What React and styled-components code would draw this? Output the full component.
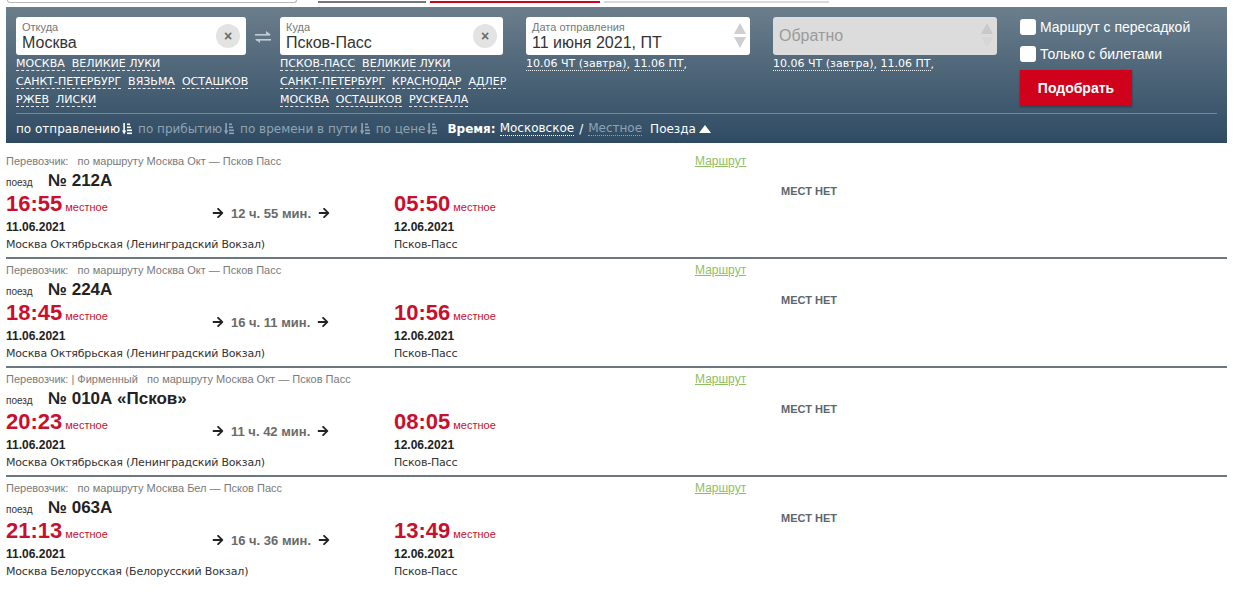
import React from 'react'
import styled, { createGlobalStyle } from 'styled-components'
import { FaArrowRight } from 'react-icons/fa'

const GlobalStyle = createGlobalStyle`
  body {
    margin: 0;
    background: #fff;
    font-family: "Liberation Sans", Arial, sans-serif;
  }
`

const TopStrip = styled.div`
  display: flex;
  align-items: flex-end;
  height: 3px;
`
const TopInput = styled.div`
  margin-left: 7px;
  width: 290px;
  height: 3px;
  box-sizing: border-box;
  border: 1px solid #b8b8b8;
  border-top: none;
  border-radius: 0 0 3px 3px;
`
const TopTab = styled.div`
  margin-left: ${p => p.ml}px;
  width: ${p => p.w}px;
  height: 2px;
  background: ${p => p.bg};
`

const Panel = styled.div`
  margin: 4px 0 0 6px;
  width: 1221px;
  box-sizing: border-box;
  padding: 10px 10px 0;
  background: linear-gradient(#6b7e8c, #2f4b63);
`
const TopArea = styled.div`
  display: flex;
  align-items: flex-start;
  height: 92px;
`
const Col = styled.div`
  width: ${p => p.w}px;
  margin-left: ${p => p.ml || 0}px;
  flex-shrink: 0;
`
const Field = styled.div`
  position: relative;
  height: 38px;
  box-sizing: border-box;
  border-radius: 3px;
  background: ${p => (p.disabled ? '#dcdcdc' : '#fff')};
  padding: 4px 6px 0;
`
const FieldLabel = styled.div`
  font-size: 11px;
  line-height: 13px;
  color: #777;
`
const FieldValue = styled.div`
  font-size: 16px;
  line-height: 18px;
  color: #333;
`
const Placeholder = styled.div`
  font-size: 16px;
  line-height: 30px;
  color: #9a9a9a;
`
const ClearBtn = styled.div`
  position: absolute;
  right: 6px;
  top: 7px;
  width: 24px;
  height: 24px;
  border-radius: 50%;
  background: #e3e3e3;
  display: flex;
  align-items: center;
  justify-content: center;
  font-weight: bold;
  font-size: 14px;
  color: #6a6a6a;
`
const Spinner = styled.div`
  position: absolute;
  right: 4px;
  top: 6px;
  display: flex;
  flex-direction: column;
  gap: 3px;
`
const SwapBox = styled.div`
  width: 34px;
  flex-shrink: 0;
  display: flex;
  justify-content: center;
  padding-top: 14px;
`
const LinkLines = styled.div`
  white-space: nowrap;
  font-family: "DejaVu Sans", Verdana, sans-serif;
  font-size: 11px;
  color: #fff;
`
const LinkLine = styled.div`
  display: flex;
  gap: ${p => (p.tight ? 0 : 7)}px;
  height: 18px;
  align-items: center;
`
const CityLink = styled.span`
  line-height: 13px;
  border-bottom: 1px dashed rgba(255, 255, 255, 0.85);
`
const DateLink = styled.span`
  line-height: 13px;
  border-bottom: 1px dotted rgba(255, 255, 255, 0.9);
`
const Options = styled.div`
  display: flex;
  flex-direction: column;
  gap: 7px;
`
const CheckRow = styled.label`
  display: flex;
  align-items: center;
  height: 20px;
  gap: 4px;
  font-size: 14px;
  color: #fff;
`
const CheckBox = styled.span`
  width: 16px;
  height: 16px;
  border-radius: 3px;
  background: #fff;
`
const SubmitBtn = styled.button`
  margin-top: -1px;
  width: 112px;
  height: 36px;
  border: none;
  background: #d0011b;
  color: #fff;
  font-family: "Liberation Sans", Arial, sans-serif;
  font-weight: bold;
  font-size: 14px;
  box-shadow: 0 1px 2px rgba(0, 0, 0, 0.35);
`
const Divider = styled.div`
  margin-top: 4px;
  height: 1px;
  background: rgba(255, 255, 255, 0.3);
`
const SortRow = styled.div`
  display: flex;
  align-items: center;
  height: 29px;
  font-family: "DejaVu Sans", Verdana, sans-serif;
  font-size: 12px;
  color: #fff;
  white-space: nowrap;
`
const SortItem = styled.span`
  display: flex;
  align-items: center;
  gap: 2px;
  margin-right: 6px;
  color: ${p => (p.active ? '#fff' : '#90a3b2')};
`
const TimeLabel = styled.span`
  font-weight: bold;
  margin: 0 4px 0 4px;
`
const TimeOpt = styled.span`
  color: ${p => (p.active ? '#fff' : '#90a3b2')};
  border-bottom: 1px dotted ${p => (p.active ? '#fff' : '#90a3b2')};
  line-height: 14px;
`
const Slash = styled.span`
  margin: 0 5px;
`
const TrainsToggle = styled.span`
  margin-left: 8px;
  display: flex;
  align-items: center;
  gap: 3px;
`

const List = styled.div`
  margin: 7px 0 0 6px;
  width: 1221px;
`
const Row = styled.div`
  display: flex;
  padding: 1px 0 5px;
  border-bottom: ${p => (p.last ? 'none' : '2px solid #6b7880')};
`
const Main = styled.div`
  width: 689px;
  flex-shrink: 0;
`
const Carrier = styled.div`
  font-size: 11px;
  line-height: 20px;
  color: #7a7a7a;
  white-space: pre;
`
const TrainLine = styled.div`
  display: flex;
  align-items: baseline;
  height: 20px;
`
const TrainWord = styled.span`
  font-size: 10px;
  color: #333;
  width: 42px;
`
const TrainNo = styled.span`
  font-size: 17px;
  font-weight: bold;
  color: #222;
  line-height: 20px;
`
const Times = styled.div`
  display: grid;
  grid-template-columns: 206px 182px auto;
`
const Point = styled.div`
  white-space: nowrap;
`
const TimeLine = styled.div`
  display: flex;
  align-items: baseline;
  gap: 3px;
  height: 26px;
`
const Clock = styled.span`
  font-size: 22px;
  font-weight: bold;
  color: #c8102e;
  line-height: 26px;
`
const Local = styled.span`
  font-size: 11px;
  color: #c8102e;
`
const DateText = styled.div`
  font-size: 12px;
  font-weight: bold;
  color: #222;
  line-height: 20px;
`
const Station = styled.div`
  font-family: "DejaVu Sans", Verdana, sans-serif;
  font-size: 11px;
  letter-spacing: -0.2px;
  line-height: 15px;
  color: #333;
`
const Duration = styled.div`
  display: flex;
  align-items: center;
  gap: 7px;
  padding-top: 12px;
  height: 20px;
  font-size: 13px;
  font-weight: bold;
  color: #6a6a6a;
  white-space: nowrap;
  svg {
    color: #222;
  }
`
const Side = styled.div`
  display: flex;
`
const RouteLink = styled.a`
  font-size: 12px;
  line-height: 20px;
  color: #8dc063;
  text-decoration: underline;
  width: 51px;
  height: 20px;
`
const Seats = styled.div`
  margin-left: 35px;
  padding-top: 34px;
  font-size: 11px;
  font-weight: bold;
  color: #5b6670;
`

const SortIcon = ({ color }) => (
  <svg width="10" height="12" viewBox="0 0 10 12">
    <rect x="1.3" y="0" width="1.6" height="9" fill={color} />
    <polygon points="0,7.5 4.2,7.5 2.1,11.5" fill={color} />
    <rect x="5" y="0.5" width="3" height="1.6" fill={color} />
    <rect x="5" y="3.5" width="4" height="1.6" fill={color} />
    <rect x="5" y="6.5" width="5" height="1.6" fill={color} />
    <rect x="5" y="9.5" width="5" height="1.6" fill={color} />
  </svg>
)

const SwapIcon = () => (
  <svg width="18" height="12" viewBox="0 0 18 12">
    <rect x="1" y="3" width="15" height="1.6" fill="#c3ccd3" />
    <polygon points="12,0 17,3.8 12,3.8" fill="#c3ccd3" />
    <rect x="2" y="8" width="15" height="1.6" fill="#c3ccd3" />
    <polygon points="6,8 1,8 6,12" fill="#c3ccd3" />
  </svg>
)

const Triangles = ({ up, down }) => (
  <Spinner>
    <svg width="12" height="11" viewBox="0 0 12 11"><polygon points="6,0 12,11 0,11" fill={up} /></svg>
    <svg width="12" height="11" viewBox="0 0 12 11"><polygon points="0,0 12,0 6,11" fill={down} /></svg>
  </Spinner>
)

const fromCities = [
  ['МОСКВА', 'ВЕЛИКИЕ ЛУКИ'],
  ['САНКТ-ПЕТЕРБУРГ', 'ВЯЗЬМА', 'ОСТАШКОВ'],
  ['РЖЕВ', 'ЛИСКИ'],
]
const toCities = [
  ['ПСКОВ-ПАСС', 'ВЕЛИКИЕ ЛУКИ'],
  ['САНКТ-ПЕТЕРБУРГ', 'КРАСНОДАР', 'АДЛЕР'],
  ['МОСКВА', 'ОСТАШКОВ', 'РУСКЕАЛА'],
]

const trains = [
  { carrier: 'Перевозчик:   по маршруту Москва Окт — Псков Пасс', no: '№ 212А', dep: '16:55', arr: '05:50', dur: '12 ч. 55 мин.', from: 'Москва Октябрьская (Ленинградский Вокзал)' },
  { carrier: 'Перевозчик:   по маршруту Москва Окт — Псков Пасс', no: '№ 224А', dep: '18:45', arr: '10:56', dur: '16 ч. 11 мин.', from: 'Москва Октябрьская (Ленинградский Вокзал)' },
  { carrier: 'Перевозчик: | Фирменный   по маршруту Москва Окт — Псков Пасс', no: '№ 010А «Псков»', dep: '20:23', arr: '08:05', dur: '11 ч. 42 мин.', from: 'Москва Октябрьская (Ленинградский Вокзал)' },
  { carrier: 'Перевозчик:   по маршруту Москва Бел — Псков Пасс', no: '№ 063А', dep: '21:13', arr: '13:49', dur: '16 ч. 36 мин.', from: 'Москва Белорусская (Белорусский Вокзал)' },
]

const Cities = ({ rows }) => (
  <LinkLines>
    {rows.map((r, i) => (
      <LinkLine key={i}>
        {r.map(c => <CityLink key={c}>{c}</CityLink>)}
      </LinkLine>
    ))}
  </LinkLines>
)

const QuickDates = () => (
  <LinkLines>
    <LinkLine tight>
      <DateLink>10.06 ЧТ (завтра)</DateLink>,&nbsp;<DateLink>11.06 ПТ</DateLink>,
    </LinkLine>
  </LinkLines>
)

const sorts = [
  ['по отправлению', true],
  ['по прибытию', false],
  ['по времени в пути', false],
  ['по цене', false],
]

const App = () => {
  return (
    <>
      <GlobalStyle />
      <TopStrip>
        <TopInput />
        <TopTab ml={21} w={108} bg="#777" />
        <TopTab ml={4} w={170} bg="#d0011b" />
        <TopTab ml={4} w={225} bg="#d8d8d8" />
      </TopStrip>
      <Panel>
        <TopArea>
          <Col w={230}>
            <Field>
              <FieldLabel>Откуда</FieldLabel>
              <FieldValue>Москва</FieldValue>
              <ClearBtn>×</ClearBtn>
            </Field>
            <Cities rows={fromCities} />
          </Col>
          <SwapBox><SwapIcon /></SwapBox>
          <Col w={223}>
            <Field>
              <FieldLabel>Куда</FieldLabel>
              <FieldValue>Псков-Пасс</FieldValue>
              <ClearBtn>×</ClearBtn>
            </Field>
            <Cities rows={toCities} />
          </Col>
          <Col w={224} ml={23}>
            <Field>
              <FieldLabel>Дата отправления</FieldLabel>
              <FieldValue>11 июня 2021, ПТ</FieldValue>
              <Triangles up="#cfcfcf" down="#cfcfcf" />
            </Field>
            <QuickDates />
          </Col>
          <Col w={224} ml={23}>
            <Field disabled>
              <Placeholder>Обратно</Placeholder>
              <Triangles up="#c9c9c9" down="#d6d6d6" />
            </Field>
            <QuickDates />
          </Col>
          <Col w={190} ml={23}>
            <Options>
              <CheckRow><CheckBox />Маршрут с пересадкой</CheckRow>
              <CheckRow><CheckBox />Только с билетами</CheckRow>
              <SubmitBtn>Подобрать</SubmitBtn>
            </Options>
          </Col>
        </TopArea>
        <Divider />
        <SortRow>
          {sorts.map(([t, a]) => (
            <SortItem key={t} active={a}>
              {t}
              <SortIcon color={a ? '#fff' : '#90a3b2'} />
            </SortItem>
          ))}
          <TimeLabel>Время:</TimeLabel>
          <TimeOpt active>Московское</TimeOpt>
          <Slash>/</Slash>
          <TimeOpt>Местное</TimeOpt>
          <TrainsToggle>
            Поезда
            <svg width="12" height="8" viewBox="0 0 12 8"><polygon points="6,0 12,8 0,8" fill="#fff" /></svg>
          </TrainsToggle>
        </SortRow>
      </Panel>
      <List>
        {trains.map((t, i) => (
          <Row key={t.no} last={i === trains.length - 1}>
            <Main>
              <Carrier>{t.carrier}</Carrier>
              <TrainLine>
                <TrainWord>поезд</TrainWord>
                <TrainNo>{t.no}</TrainNo>
              </TrainLine>
              <Times>
                <Point>
                  <TimeLine><Clock>{t.dep}</Clock><Local>местное</Local></TimeLine>
                  <DateText>11.06.2021</DateText>
                  <Station>{t.from}</Station>
                </Point>
                <Duration>
                  <FaArrowRight size={12} />
                  {t.dur}
                  <FaArrowRight size={12} />
                </Duration>
                <Point>
                  <TimeLine><Clock>{t.arr}</Clock><Local>местное</Local></TimeLine>
                  <DateText>12.06.2021</DateText>
                  <Station>Псков-Пасс</Station>
                </Point>
              </Times>
            </Main>
            <Side>
              <RouteLink>Маршрут</RouteLink>
              <Seats>МЕСТ НЕТ</Seats>
            </Side>
          </Row>
        ))}
      </List>
    </>
  )
}

export default App
